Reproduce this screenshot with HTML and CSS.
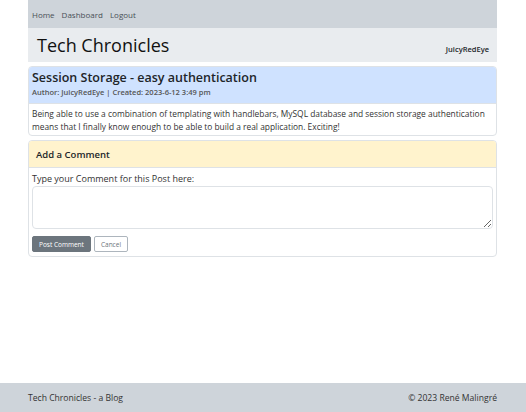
FILE: index.html
```html
<!DOCTYPE html>
<html>
<head>
<meta charset="utf-8">
<link rel="stylesheet" href="styles.css">
</head>
<body>
<div class="page">
  <main class="container">
    <nav class="navbar">
      <a href="#">Home</a>
      <a href="#">Dashboard</a>
      <a href="#">Logout</a>
    </nav>
    <header class="masthead">
      <h1>Tech Chronicles</h1>
      <span class="user">JuicyRedEye</span>
    </header>
    <section class="card post">
      <div class="card-header post-header">
        <h2>Session Storage - easy authentication</h2>
        <p class="meta">Author: JuicyRedEye | Created: 2023-6-12 3:49 pm</p>
      </div>
      <div class="card-body">
        <p>Being able to use a combination of templating with handlebars, MySQL database and session storage authentication means that I finally know enough to be able to build a real application. Exciting!</p>
      </div>
    </section>
    <section class="card comment">
      <div class="card-header comment-header">
        <h3>Add a Comment</h3>
      </div>
      <div class="card-body comment-body">
        <label for="c">Type your Comment for this Post here:</label>
        <textarea id="c"></textarea>
        <div class="actions">
          <button class="btn btn-primary">Post Comment</button>
          <button class="btn btn-outline">Cancel</button>
        </div>
      </div>
    </section>
  </main>
  <footer class="footer">
    <span>Tech Chronicles - a Blog</span>
    <span>© 2023 René Malingré</span>
  </footer>
</div>
</body>
</html>
```
FILE: styles.css
```css
* { box-sizing: border-box; }
html, body { margin: 0; padding: 0; height: 100%; }
body {
  font-family: "Open Sans", "Noto Sans", sans-serif;
  color: #212529;
  background: #fff;
}
.page {
  min-height: 412px;
  display: flex;
  flex-direction: column;
}
.container {
  width: 469px;
  margin-left: 28px;
  flex: 1;
  display: flex;
  flex-direction: column;
}
.navbar {
  background: #ced4da;
  height: 28px;
  display: flex;
  align-items: center;
  gap: 7px;
  padding: 0 4px;
}
.navbar a {
  color: #495057;
  text-decoration: none;
  font-size: 8px;
}
.masthead {
  background: #e9ecef;
  height: 34px;
  display: flex;
  align-items: center;
  justify-content: space-between;
  padding: 0 8px 0 9px;
}
.masthead h1 {
  margin: 0;
  font-size: 18px;
  font-weight: 500;
  color: #111;
}
.user {
  font-size: 7.5px;
  font-weight: 600;
  margin-top: 8px;
}
.card {
  border: 1px solid #dee2e6;
  border-radius: 4px;
  overflow: hidden;
}
.post { margin-top: 4px; }
.comment { margin-top: 4px; }
.post-header {
  background: #cfe2ff;
  padding: 2px 3px 5px;
  border-bottom: 1px solid #dee2e6;
}
.post-header h2 {
  margin: 0;
  font-size: 12.5px;
  font-weight: 600;
  line-height: 17px;
}
.meta {
  margin: 0;
  font-size: 7.5px;
  font-weight: 600;
  color: #555;
  line-height: 12px;
}
.card-body {
  padding: 3px 3px 2px;
}
.card-body p {
  margin: 0;
  font-size: 8.4px;
  line-height: 13px;
  color: #333;
}
.comment-header {
  background: #fff3cd;
  padding: 0 7px;
  height: 27px;
  display: flex;
  align-items: center;
  border-bottom: 1px solid #dee2e6;
}
.comment-header h3 {
  margin: 0;
  font-size: 9.5px;
  font-weight: 600;
}
.comment-body {
  display: flex;
  flex-direction: column;
  padding: 4px 3px 4px;
}
label {
  font-size: 9px;
  color: #333;
  line-height: 13px;
}
textarea {
  margin-top: 1px;
  height: 43px;
  border: 1px solid #dee2e6;
  border-radius: 4px;
  resize: vertical;
  font-family: inherit;
}
.actions {
  display: flex;
  gap: 3px;
  margin-top: 7px;
}
.btn {
  font-family: inherit;
  font-size: 6.5px;
  height: 16px;
  padding: 0 6px;
  border-radius: 2px;
}
.btn-primary {
  background: #6c757d;
  border: 1px solid #6c757d;
  color: #fff;
}
.btn-outline {
  background: #fff;
  border: 1px solid #adb5bd;
  color: #6c757d;
}
.footer {
  background: #ced4da;
  height: 29px;
  display: flex;
  align-items: center;
  justify-content: space-between;
  padding: 1px 29px 0 28px;
  font-size: 8.6px;
  color: #333;
}
```
